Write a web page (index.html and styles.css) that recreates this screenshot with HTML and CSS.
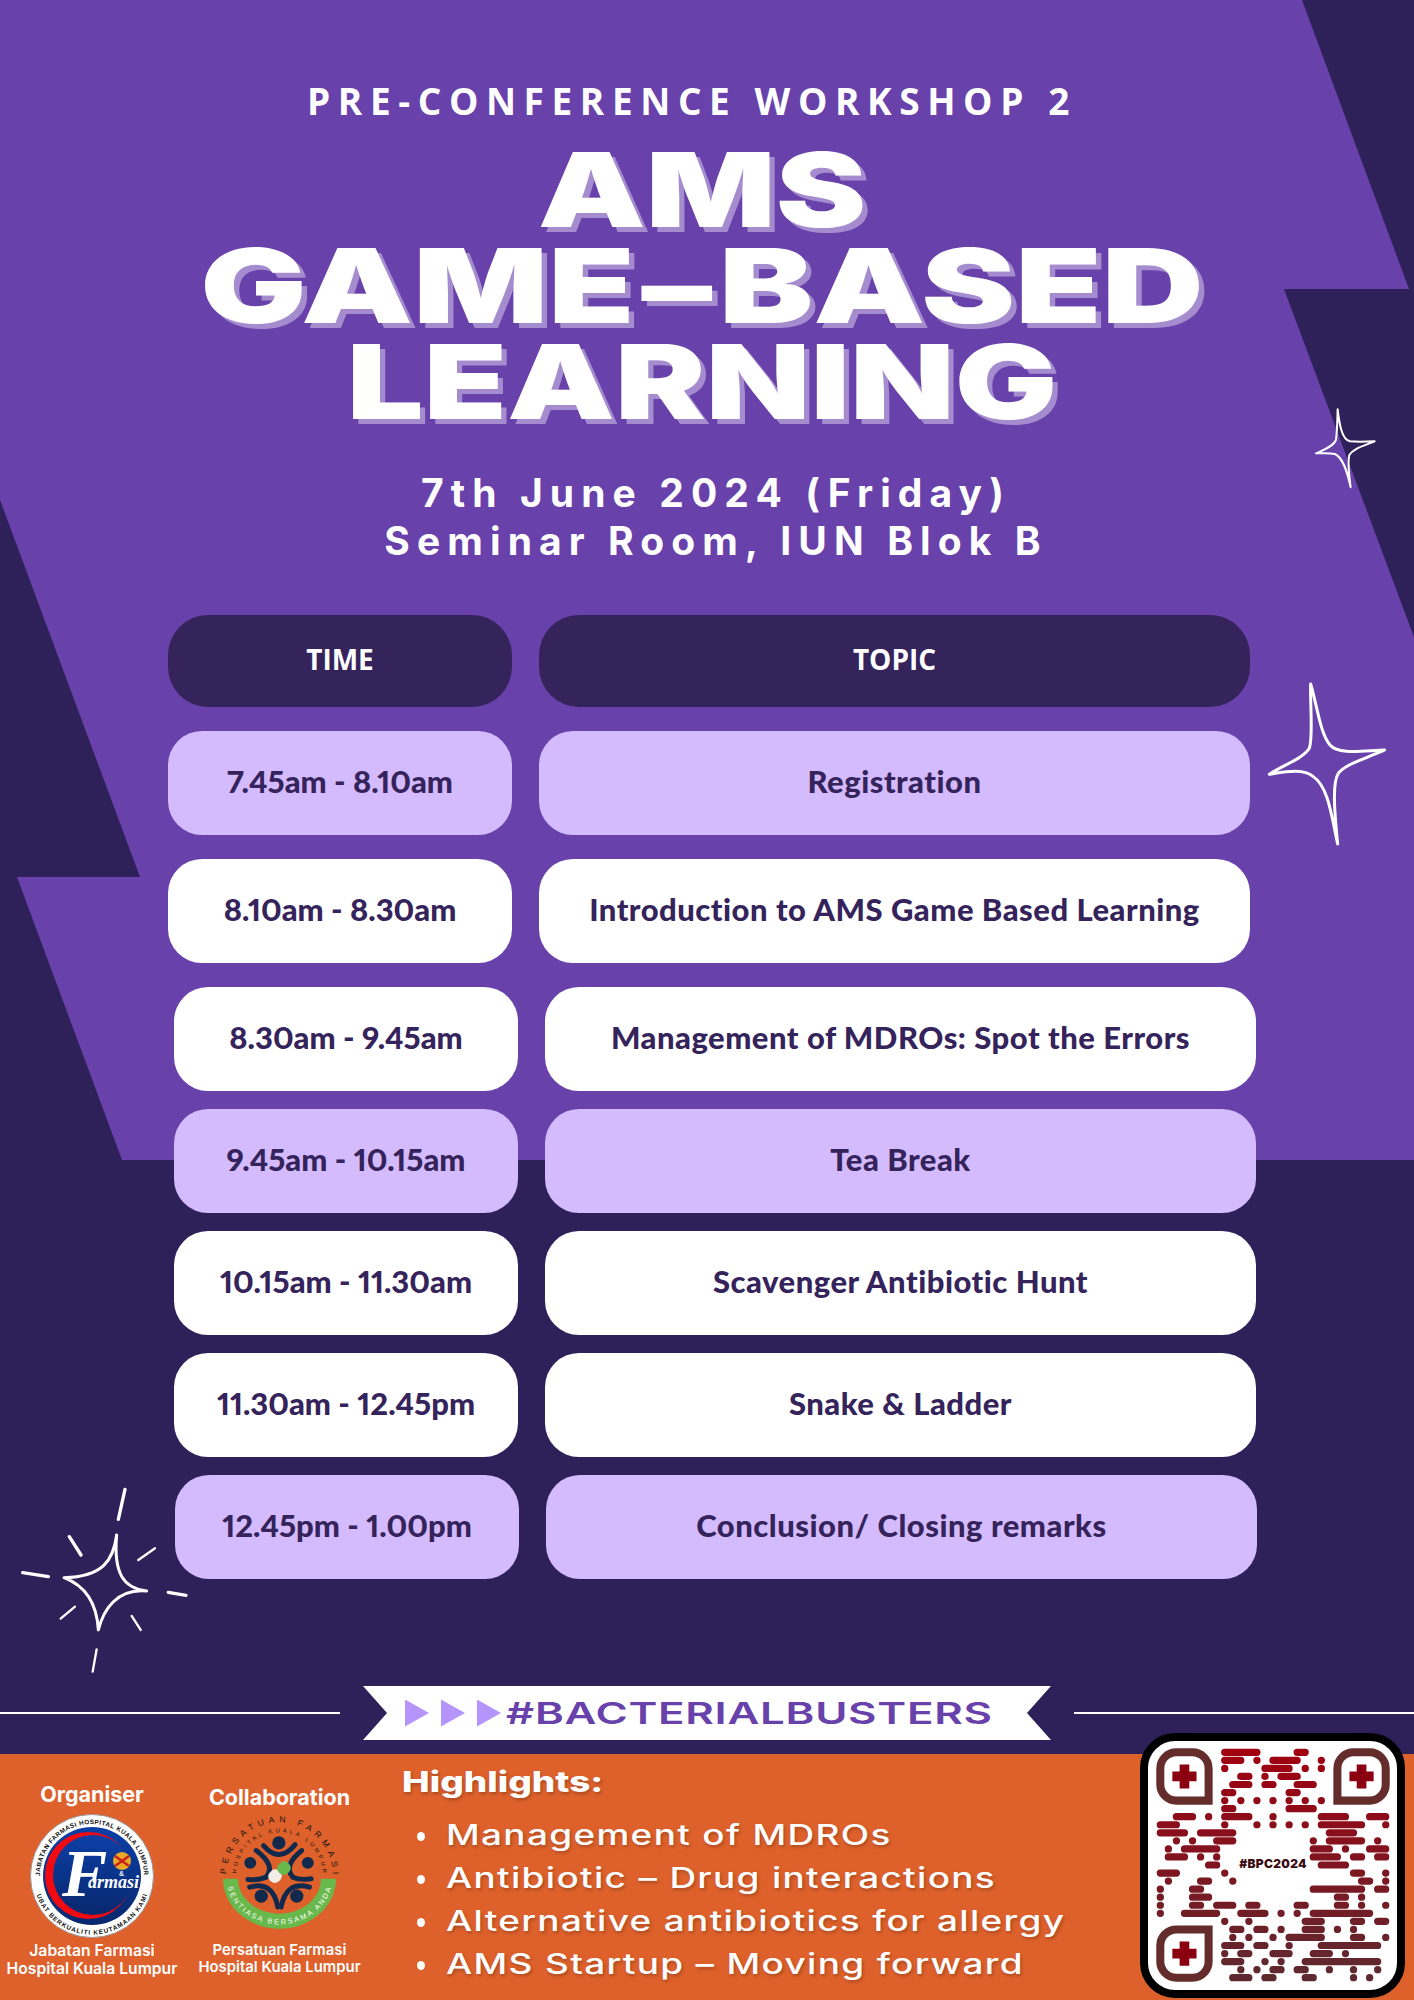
FILE: index.html
```html
<!DOCTYPE html>
<html lang="en">
<head>
  <meta charset="UTF-8">
  <meta name="viewport" content="width=device-width, initial-scale=1.0">
  <title>AMS Game-Based Learning</title>
  <link rel="stylesheet" href="styles.css">
</head>
<body>
  <div class="poster">

    <!-- Background shapes and sparkles -->
    <svg class="backdrop" viewBox="0 0 1414 2000">
      <polygon fill="#6841ab" points="0,0 1302,0 1409,289 1284,289 1414,637 1414,1160 122,1160 17,877 140,877 0,500"/>
      <g transform="translate(1250 380) scale(.3333)" fill="none" stroke="#fff" stroke-width="6" stroke-linejoin="round">
        <path d="M263 88C268 130 275 180 300 184C325 186 350 185 374 184C340 198 310 205 298 225C292 250 298 290 302 322C292 275 280 235 255 222C235 218 215 220 198 220C220 210 250 200 258 180C262 150 262 120 263 88Z"/>
      </g>
      <g transform="translate(1250 380) scale(.3333)" fill="none" stroke="#fff" stroke-width="9" stroke-linejoin="round">
        <path d="M182 912C200 970 210 1060 240 1095C265 1125 340 1112 404 1110C350 1135 290 1150 265 1180C245 1210 255 1310 263 1392C245 1310 235 1220 190 1190C160 1165 110 1175 58 1183C100 1155 160 1135 178 1105C190 1070 180 980 182 912Z"/>
      </g>
      <g transform="translate(0 1460) scale(.3333)" fill="none" stroke="#fff" stroke-linecap="round" stroke-linejoin="round">
        <path stroke-width="9" d="M350 225C340 300 310 350 192 353C250 375 290 420 295 510C310 450 350 385 440 393C370 385 340 340 350 225Z"/>
        <path stroke-width="10" d="M375 88L355 178M208 230L243 285M68 338L145 350M505 397L558 406"/>
        <path stroke-width="7" d="M465 265L415 300M225 440L182 476M395 468L422 510M290 568L278 635"/>
      </g>
    </svg>

    <!-- Heading -->
    <header class="intro">
      <p class="kicker">PRE-CONFERENCE WORKSHOP 2</p>
      <h1 class="title">
        <span class="title-line">AMS</span>
        <span class="title-line game">GAME<span class="dash">–</span>BASED</span>
        <span class="title-line">LEARNING</span>
      </h1>
      <p class="when">7th June 2024 (Friday)</p>
      <p class="where">Seminar Room, IUN Blok B</p>
    </header>

    <!-- Programme -->
    <section class="schedule">
      <div class="row">
        <div class="cell head">TIME</div>
        <div class="cell head">TOPIC</div>
      </div>
      <div class="row first">
        <div class="cell lilac">7.45am - 8.10am</div>
        <div class="cell lilac">Registration</div>
      </div>
      <div class="row first">
        <div class="cell plain">8.10am - 8.30am</div>
        <div class="cell plain">Introduction to AMS Game Based Learning</div>
      </div>
      <div class="row first shift">
        <div class="cell plain">8.30am - 9.45am</div>
        <div class="cell plain">Management of MDROs: Spot the Errors</div>
      </div>
      <div class="row shift">
        <div class="cell lilac">9.45am - 10.15am</div>
        <div class="cell lilac">Tea Break</div>
      </div>
      <div class="row shift">
        <div class="cell plain">10.15am - 11.30am</div>
        <div class="cell plain">Scavenger Antibiotic Hunt</div>
      </div>
      <div class="row shift">
        <div class="cell plain">11.30am - 12.45pm</div>
        <div class="cell plain">Snake &amp; Ladder</div>
      </div>
      <div class="row shift last">
        <div class="cell lilac">12.45pm - 1.00pm</div>
        <div class="cell lilac">Conclusion/ Closing remarks</div>
      </div>
    </section>

    <!-- Hashtag ribbon -->
    <div class="ribbon-row">
      <span class="rule"></span>
      <div class="ribbon">
        <span class="arrow"></span><span class="arrow"></span><span class="arrow"></span>
        <span class="hashtag">#BACTERIALBUSTERS</span>
      </div>
      <span class="rule"></span>
    </div>

    <!-- Footer -->
    <footer class="footer">
      <div class="org org-a">
        <p class="org-label">Organiser</p>
        <svg class="logo-a" viewBox="0 0 124 124">
          <defs>
            <linearGradient id="navy" x1="0" y1="0" x2="0" y2="1">
              <stop offset="0" stop-color="#0c3fa6"/>
              <stop offset="1" stop-color="#08286e"/>
            </linearGradient>
            <path id="ring-top" d="M10.6 70A52 52 0 1 1 113.4 70"/>
            <path id="ring-bottom" d="M6.3 80A58.5 58.5 0 0 0 117.7 80"/>
          </defs>
          <circle cx="62" cy="62" r="61.5" fill="#fff" stroke="#999" stroke-width="1"/>
          <circle cx="62" cy="62" r="49" fill="url(#navy)"/>
          <circle cx="58.5" cy="61.5" r="43.5" fill="#f00a12"/>
          <circle cx="63" cy="61" r="40" fill="url(#navy)"/>
          <circle cx="92" cy="47" r="9" fill="#e9a826"/>
          <path d="M85 42L99 52M99 42L85 52" stroke="#c9201c" stroke-width="2.5"/>
          <text class="ring-text" fill="#111"><textPath href="#ring-top" startOffset="8" textLength="162">JABATAN FARMASI HOSPITAL KUALA LUMPUR</textPath></text>
          <text class="ring-text" fill="#111"><textPath href="#ring-bottom" startOffset="1" textLength="145">UBAT BERKUALITI KEUTAMAAN KAMI</textPath></text>
          <text class="logo-f" x="32" y="82">F</text>
          <text class="logo-armasi" x="58" y="74">armasi</text>
          <text class="logo-amp" x="89" y="62">&amp;</text>
        </svg>
        <p class="org-name">Jabatan Farmasi<br>Hospital Kuala Lumpur</p>
      </div>

      <div class="org org-b">
        <p class="org-label">Collaboration</p>
        <svg class="logo-b" viewBox="60 105 370 355">
          <defs>
            <path id="arc-outer" d="M85 290A160 160 0 0 1 405 290"/>
            <path id="arc-inner" d="M115 290A130 130 0 0 1 375 290"/>
            <path id="arc-green" d="M87 300A158 137 0 0 0 403 300"/>
          </defs>
          <path d="M75 300H120A125 105 0 0 0 370 300H415A170 150 0 0 1 75 300Z" fill="#69b84c"/>
          <g fill="#10294d">
            <circle cx="243" cy="192" r="20"/>
            <circle cx="157" cy="252" r="18"/>
            <circle cx="330" cy="252" r="18"/>
            <circle cx="190" cy="352" r="20"/>
            <circle cx="297" cy="352" r="20"/>
          </g>
          <g fill="none" stroke="#10294d" stroke-width="15" stroke-linecap="round">
            <path d="M197 200Q245 255 292 197"/>
            <path d="M175 215Q235 260 205 295Q180 305 150 302"/>
            <path d="M312 215Q255 260 285 295Q305 305 340 300"/>
            <path d="M155 325Q225 305 240 385"/>
            <path d="M335 325Q265 305 250 385"/>
          </g>
          <g transform="rotate(-42 245 280)">
            <rect x="207" y="261" width="40" height="38" rx="17" fill="#f2ede6"/>
            <rect x="243" y="261" width="40" height="38" rx="17" fill="#69b84c"/>
          </g>
          <text class="arc-big"><textPath href="#arc-outer" startOffset="4" textLength="495">PERSATUAN FARMASI</textPath></text>
          <text class="arc-small"><textPath href="#arc-inner" startOffset="6" textLength="395">HOSPITAL KUALA LUMPUR</textPath></text>
          <text class="arc-green"><textPath href="#arc-green" startOffset="25" textLength="410">SENTIASA BERSAMA ANDA</textPath></text>
        </svg>
        <p class="org-name">Persatuan Farmasi<br>Hospital Kuala Lumpur</p>
      </div>

      <div class="highlights">
        <h2><span class="stretch">Highlights:</span></h2>
        <ul>
          <li><span class="stretch">Management of MDROs</span></li>
          <li><span class="stretch">Antibiotic – Drug interactions</span></li>
          <li><span class="stretch">Alternative antibiotics for allergy</span></li>
          <li><span class="stretch">AMS Startup – Moving forward</span></li>
        </ul>
      </div>
    </footer>

    <!-- QR code sits across the footer edge -->
    <svg class="qr" viewBox="0 0 265 265">
      <defs>
        <linearGradient id="qr-ink" gradientUnits="userSpaceOnUse" x1="0" y1="0" x2="0" y2="28">
          <stop offset="0" stop-color="#a00010"/>
          <stop offset="1" stop-color="#5e2a30"/>
        </linearGradient>
        <g id="finder">
          <path d="M2 0H4A2 2 0 0 1 6 2V6H2A2 2 0 0 1 0 4V2A2 2 0 0 1 2 0Z" fill="none" stroke="#652c2c" stroke-width="1"/>
          <path d="M2.4 1.5H3.6V2.4H4.5V3.6H3.6V4.5H2.4V3.6H1.5V2.4H2.4Z" fill="#8b0010"/>
        </g>
      </defs>
      <rect x="4" y="4" width="257" height="257" rx="31" fill="#fff" stroke="#000" stroke-width="8"/>
      <g transform="translate(20.3 19.3) scale(8.05)">
        <use href="#finder"/>
        <use href="#finder" transform="translate(28 0) scale(-1 1)"/>
        <use href="#finder" transform="translate(0 28) scale(1 -1)"/>
        <path fill="none" stroke="url(#qr-ink)" stroke-width=".9" stroke-linecap="round" d="M8 0H12M17 0H18M8 1H10M12 1h.01M14 1H17M20 1h.01M8 2h.01M13 2H16M18 2h.01M20 2h.01M10 3H11M13 3h.01M15 3H17M9 4H11M13 4H14M17 4H19M8 5H9M16 5H17M8 6h.01M10 6h.01M12 6h.01M14 6h.01M16 6h.01M18 6h.01M20 6h.01M8 7H9M16 7H19M2 8H4M6 8h.01M8 8H11M14 8h.01M20 8H23M26 8H28M0 9H2M8 9h.01M12 9h.01M14 9h.01M16 9h.01M18 9h.01M20 9H25M28 9h.01M0 10H3M5 10H9M21 10H24M2 11h.01M4 11h.01M7 11H9M19 11h.01M21 11H25M27 11h.01M1 12h.01M3 12H7M19 12H21M23 12h.01M26 12H28M1 13H3M5 13h.01M7 13h.01M19 13H22M24 13H25M27 13H28M6 14H7M20 14H23M0 15H2M8 15h.01M24 15H25M28 15h.01M1 16h.01M5 16H6M9 16h.01M25 16H26M28 16h.01M0 17h.01M4 17H5M19 17H25M27 17H28M0 18h.01M4 18H6M22 18H23M25 18h.01M0 19h.01M4 19H5M7 19H9M11 19H12M17 19H18M22 19H23M25 19h.01M28 19h.01M0 20h.01M3 20H7M10 20H13M15 20h.01M17 20h.01M19 20H26M8 21h.01M11 21h.01M18 21H20M24 21H25M27 21H28M9 22H10M12 22H13M15 22h.01M18 22H20M22 22h.01M24 22h.01M9 23h.01M11 23h.01M14 23h.01M16 23H20M24 23H25M28 23h.01M8 24H10M12 24H13M16 24h.01M20 24H27M8 25h.01M10 25H11M14 25H16M19 25H21M23 25h.01M8 26H10M13 26h.01M15 26h.01M18 26H27M10 27h.01M12 27h.01M14 27H15M17 27H18M21 27h.01M24 27h.01M27 27h.01M9 28H11M13 28H14M18 28H19M24 28h.01M26 28h.01"/>
      </g>
      <text class="qr-tag" x="133" y="134.5" text-anchor="middle">#BPC2024</text>
    </svg>
  </div>
</body>
</html>
```
FILE: styles.css
```css
* {
  box-sizing: border-box;
}
html, body {
  margin: 0;
  padding: 0;
}
body {
  font-family: "Inter", sans-serif;
  color: white;
}
p, h1, h2, ul {
  margin: 0;
  padding: 0;
}
.poster {
  position: relative;
  width: 1414px;
  height: 2000px;
  overflow: hidden;
  background-color: #2e2059;
}
.backdrop {
  position: absolute;
  left: 0;
  top: 0;
  width: 1414px;
  height: 2000px;
}

/* Heading */
.intro {
  position: relative;
  padding-top: 78px;
  text-align: center;
}
.kicker {
  padding-right: 30px;
  font-family: "Open Sans", sans-serif;
  font-size: 37px;
  font-weight: 700;
  line-height: 46px;
  letter-spacing: 7.6px;
}
.title {
  margin-top: 18px;
  padding-right: 10px;
  font-family: "Inter", sans-serif;
  font-size: 103px;
  font-weight: 900;
  line-height: 96px;
}
.title-line {
  display: block;
  height: 96px;
  transform: scaleX(1.32);
  text-shadow: 4px 5px 0 #a58ccf;
}
.title-line.game {
  transform: scaleX(1.37);
}
.dash {
  margin: 0 5px;
}
.when, .where {
  padding-left: 18px;
  font-family: "Inter", sans-serif;
  font-size: 39px;
  font-weight: 700;
  letter-spacing: 7.1px;
  line-height: 48px;
}
.when {
  margin-top: 39px;
}

/* Programme */
.schedule {
  position: relative;
  margin-top: 50px;
  padding-left: 168px;
}
.row {
  display: grid;
  grid-template-columns: 344px 711px;
  column-gap: 27px;
  margin-top: 18px;
}
.row:first-child {
  margin-top: 0;
}
.row.first {
  margin-top: 24px;
}
.row.shift {
  margin-left: 6px;
}
.row.last {
  margin-left: 7px;
}
.cell {
  display: flex;
  align-items: center;
  justify-content: center;
  height: 104px;
  padding-bottom: 5px;
  border-radius: 34px;
  font-family: "Lato", sans-serif;
  font-size: 31px;
  font-weight: 900;
  font-variant-numeric: proportional-nums;
  letter-spacing: .5px;
  color: #35235b;
}
.cell:first-child {
  letter-spacing: 0;
}
.cell.head {
  height: 92px;
  border-radius: 40px;
  background-color: #35235b;
  font-family: "Open Sans", sans-serif;
  font-size: 28px;
  font-weight: 700;
  letter-spacing: 0;
  color: white;
}
.cell.lilac {
  background-color: #d4bbfd;
}
.cell.plain {
  background-color: white;
}

/* Ribbon */
.ribbon-row {
  position: relative;
  display: flex;
  align-items: center;
  gap: 23px;
  margin-top: 107px;
  height: 54px;
}
.rule {
  flex: 1;
  height: 2px;
  background-color: white;
}
.ribbon {
  display: flex;
  align-items: center;
  gap: 12px;
  width: 688px;
  height: 54px;
  padding-left: 42px;
  background-color: white;
  clip-path: polygon(0 0, 100% 0, 664px 50%, 100% 100%, 0 100%, 24px 50%);
}
.arrow {
  width: 24px;
  height: 27px;
  background-color: #b595fb;
  clip-path: polygon(0 0, 100% 50%, 0 100%);
}
.hashtag {
  margin-left: -7px;
  font-family: "Inter", sans-serif;
  font-size: 30px;
  font-weight: 600;
  letter-spacing: .5px;
  color: #6841ab;
  transform: scaleX(1.46);
  transform-origin: left center;
}

/* Footer */
.footer {
  position: relative;
  display: flex;
  height: 260px;
  margin-top: 14px;
  background-color: #de612b;
}
.org {
  display: flex;
  flex-direction: column;
  align-items: center;
  text-align: center;
}
.org-a {
  width: 184px;
  padding-top: 26px;
}
.org-b {
  width: 191px;
  padding-top: 29px;
}
.org-label {
  font-size: 21.5px;
  font-weight: 700;
  line-height: 28px;
}
.logo-a {
  width: 124px;
  height: 124px;
  margin-top: 6px;
}
.logo-b {
  width: 123px;
  height: 118px;
  margin-top: 3px;
}
.org-name {
  margin-top: 4px;
  font-size: 15.7px;
  font-weight: 600;
  line-height: 18px;
  white-space: nowrap;
}
.org-b .org-name {
  margin-top: 10px;
  font-size: 14.9px;
  line-height: 17px;
}
.ring-text {
  font-family: "Liberation Sans", sans-serif;
  font-size: 6.4px;
  font-weight: 700;
}
.logo-f {
  font-family: "Liberation Serif", serif;
  font-size: 68px;
  font-style: italic;
  font-weight: 700;
  fill: white;
}
.logo-armasi {
  font-family: "Liberation Serif", serif;
  font-size: 18px;
  font-style: italic;
  font-weight: 700;
  fill: white;
}
.logo-amp {
  font-family: "Liberation Sans", sans-serif;
  font-size: 7px;
  font-weight: 700;
  fill: #f2f2f2;
}
.arc-big {
  font-family: "Liberation Sans", sans-serif;
  font-size: 26px;
  fill: #111;
}
.arc-small {
  font-family: "Liberation Sans", sans-serif;
  font-size: 17px;
  fill: #111;
}
.arc-green {
  font-family: "Liberation Sans", sans-serif;
  font-size: 22px;
  fill: white;
}
.highlights {
  padding: 11px 0 0 27px;
  text-shadow: 1px 2px 3px rgba(0, 0, 0, 0.25);
}
.stretch {
  display: inline-block;
  transform: scaleX(1.32);
  transform-origin: left center;
  white-space: nowrap;
}
.highlights h2 {
  font-size: 28px;
  font-weight: 800;
  line-height: 34px;
}
.highlights ul {
  margin-top: 15px;
  list-style: none;
}
.highlights li {
  position: relative;
  padding-left: 44px;
  font-size: 28px;
  font-weight: 500;
  line-height: 43px;
  letter-spacing: 1px;
}
.highlights li::before {
  content: "";
  position: absolute;
  left: 15px;
  top: 18px;
  width: 8px;
  height: 9px;
  border-radius: 50%;
  background-color: white;
}

/* QR */
.qr {
  position: absolute;
  left: 1140px;
  top: 1733px;
  width: 265px;
  height: 265px;
}
.qr-tag {
  font-family: "Inter", sans-serif;
  font-size: 12px;
  font-weight: 900;
  letter-spacing: .3px;
  fill: #3a0d12;
}
```
